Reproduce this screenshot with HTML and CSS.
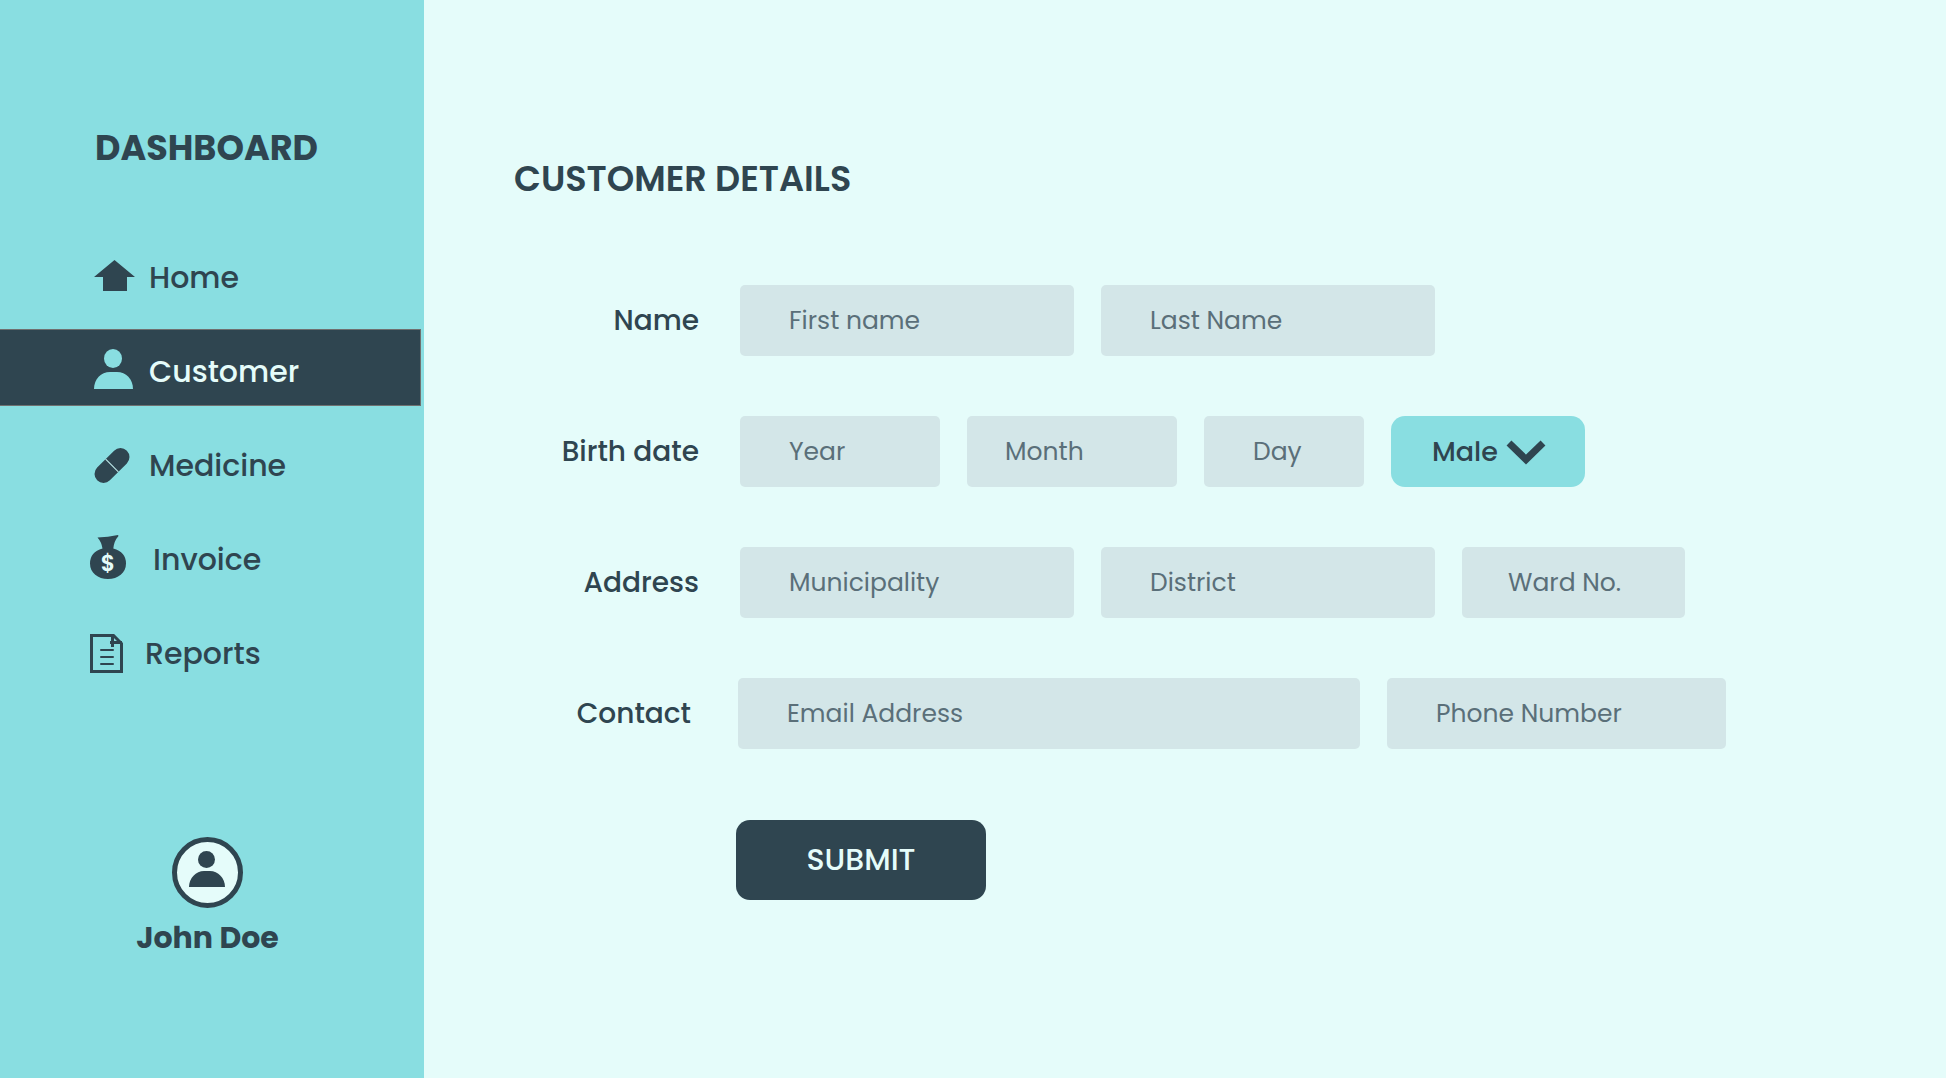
FILE: index.html
```html
<!DOCTYPE html>
<html lang="en">
<head>
<meta charset="utf-8">
<meta name="viewport" content="width=device-width, initial-scale=1">
<title>Customer details</title>
<link rel="stylesheet" href="styles.css">
</head>
<body>
<div class="app">
  <aside class="sidebar">
    <h1 class="brand">DASHBOARD</h1>
    <nav class="nav">
      <a class="nav-item" href="#home">
        <svg width="45" height="49" viewBox="0 0 45 49" aria-hidden="true"><path fill="currentColor" d="M24.500 7L45 24H37V38H13V24H4Z"/></svg>
        <span>Home</span>
      </a>
      <a class="nav-item active" href="#customer" aria-current="page">
        <svg width="45" height="49" viewBox="0 0 45 49" aria-hidden="true"><g fill="#89dee1"><ellipse cx="23" cy="11.500" rx="9" ry="9.500"/><path d="M4 42C4 32 11 25 20 25H27C36 25 43 32 43 42Z"/></g></svg>
        <span>Customer</span>
      </a>
      <a class="nav-item" href="#medicine">
        <svg width="45" height="49" viewBox="0 0 45 49" aria-hidden="true"><g transform="rotate(-45 22 24.500)"><rect x="1" y="15.500" width="42" height="18" rx="9" fill="currentColor"/><path d="M22 15.500V33.500" stroke="#c4f0f0" stroke-width="1"/></g></svg>
        <span>Medicine</span>
      </a>
      <a class="nav-item" href="#invoice">
        <svg width="49" height="49" viewBox="0 0 49 49" aria-hidden="true"><path fill="currentColor" d="M7.500 2.500Q18 2 28 0L28.500 1Q24 6 23.300 13.500Q36 17 36 28.500C36 38 28 44 18 44S0 38 0 28.500Q0 17 12.500 13.500Q11.500 7 7.500 2.500Z"/><text class="coin" x="18" y="36" text-anchor="middle">$</text></svg>
        <span>Invoice</span>
      </a>
      <a class="nav-item" href="#reports">
        <svg width="41" height="49" viewBox="0 0 41 49" aria-hidden="true"><g fill="none" stroke="currentColor"><path stroke-width="3" d="M1.500 6.500H23.500L31.500 14.500V42.500H1.500Z"/><path stroke-width="3" d="M22.500 6V18M20 13.500H32"/><path stroke-width="2" stroke-linecap="round" d="M11 21H23M11 28H23M11 35H23"/></g></svg>
        <span>Reports</span>
      </a>
    </nav>
    <div class="profile">
      <svg width="71" height="71" viewBox="0 0 71 71" aria-hidden="true"><circle cx="35.500" cy="35.500" r="33" fill="#e5fcfa" stroke="currentColor" stroke-width="5"/><g fill="currentColor"><circle cx="34.500" cy="22.500" r="8.500"/><path d="M17 50C17 41 24 34 32 34H38C46 34 53 41 53 50Z"/></g></svg>
      <span class="profile-name">John Doe</span>
    </div>
  </aside>

  <main class="content">
    <h2 class="title">CUSTOMER DETAILS</h2>
    <form class="form">
      <div class="row">
        <label class="label" for="first">Name</label>
        <input class="field wide" id="first" type="text" placeholder="First name">
        <input class="field wide" type="text" placeholder="Last Name" aria-label="Last name">
      </div>
      <div class="row">
        <label class="label" for="year">Birth date</label>
        <input class="field year" id="year" type="text" placeholder="Year">
        <input class="field month" type="text" placeholder="Month" aria-label="Month">
        <input class="field day" type="text" placeholder="Day" aria-label="Day">
        <div class="select-wrap">
          <select class="select" aria-label="Gender"><option>Male</option><option>Female</option></select>
          <svg class="chevron" width="40" height="26" viewBox="0 0 40 26" aria-hidden="true"><path fill="none" stroke="currentColor" stroke-width="7" d="M3 3L20 19.500L37 3"/></svg>
        </div>
      </div>
      <div class="row">
        <label class="label" for="municipality">Address</label>
        <input class="field wide" id="municipality" type="text" placeholder="Municipality">
        <input class="field wide" type="text" placeholder="District" aria-label="District">
        <input class="field ward" type="text" placeholder="Ward No." aria-label="Ward number">
      </div>
      <div class="row">
        <label class="label label-contact" for="email">Contact</label>
        <input class="field email" id="email" type="email" placeholder="Email Address">
        <input class="field phone" type="tel" placeholder="Phone Number" aria-label="Phone number">
      </div>
      <button class="submit" type="submit">SUBMIT</button>
    </form>
  </main>
</div>
</body>
</html>
```
FILE: styles.css
```css
:root {
  --ink: #2f4550;
  --aqua: #89dee1;
  --mist: #e5fcfa;
  --field: #d3e6e8;
}

* { box-sizing: border-box; }

body {
  margin: 0;
  background: var(--mist);
  color: var(--ink);
  font-family: Poppins, Inter, sans-serif;
}

.app {
  display: flex;
  min-height: 100vh;
}

.sidebar {
  flex: 0 0 424px;
  background: var(--aqua);
}

.brand {
  margin: 126px 0 0 95px;
  font-size: 35px;
  line-height: 44px;
  font-weight: 700;
}

.nav {
  display: flex;
  flex-direction: column;
  gap: 17px;
  margin: 65px 3px 0 0;
}

.nav-item {
  display: flex;
  align-items: center;
  gap: 14px;
  height: 77px;
  padding: 8px 0 0 90px;
  border: 1px solid transparent;
  border-left: 0;
  color: inherit;
  font-size: 30px;
  line-height: 40px;
  font-weight: 500;
  text-decoration: none;
}

.nav-item.active {
  background: var(--ink);
  border-color: #707070;
  color: var(--mist);
}

.coin {
  fill: var(--mist);
  font-size: 22px;
  font-weight: 600;
}

.profile {
  display: flex;
  flex-direction: column;
  align-items: center;
  gap: 10px;
  margin-top: 149px;
  padding: 0 9px 40px 0;
}

.profile-name {
  font-size: 30px;
  line-height: 40px;
  font-weight: 700;
}

.content {
  flex: 1;
  min-width: 0;
  padding: 157px 90px 90px;
}

.title {
  margin: 0;
  font-size: 35px;
  line-height: 44px;
  font-weight: 600;
}

.form {
  display: flex;
  flex-direction: column;
  gap: 60px;
  margin-top: 84px;
}

.row {
  display: flex;
  align-items: center;
  gap: 27px;
}

.label {
  flex: 0 0 199px;
  padding-right: 14px;
  font-size: 28px;
  line-height: 36px;
  font-weight: 500;
  text-align: right;
}

.label-contact {
  flex-basis: 197px;
  padding-right: 20px;
}

.field {
  min-width: 0;
  height: 71px;
  padding: 0 0 0 49px;
  border: 0;
  border-radius: 5px;
  background: var(--field);
  color: var(--ink);
  font: 400 25px/36px Poppins, Inter, sans-serif;
}

.field::placeholder {
  color: #5a6f79;
  opacity: 1;
}

.wide { flex: 0 1 334px; }
.year { flex: 0 1 200px; }
.month { flex: 0 1 210px; padding-left: 38px; }
.day { flex: 0 1 160px; }
.ward { flex: 0 1 223px; padding-left: 46px; }
.email { flex: 0 1 622px; }
.phone { flex: 0 1 339px; }

.select-wrap {
  position: relative;
  flex: 0 1 194px;
}

.select {
  width: 100%;
  height: 71px;
  padding: 0 0 0 41px;
  border: 0;
  border-radius: 14px;
  appearance: none;
  background: var(--aqua);
  color: var(--ink);
  font: 500 27px/36px Poppins, Inter, sans-serif;
}

.chevron {
  position: absolute;
  top: 24px;
  right: 39px;
  pointer-events: none;
}

.submit {
  width: 250px;
  height: 80px;
  margin: 11px 0 0 222px;
  border: 0;
  border-radius: 14px;
  background: var(--ink);
  color: var(--mist);
  font: 500 30px/40px Poppins, Inter, sans-serif;
}
```
